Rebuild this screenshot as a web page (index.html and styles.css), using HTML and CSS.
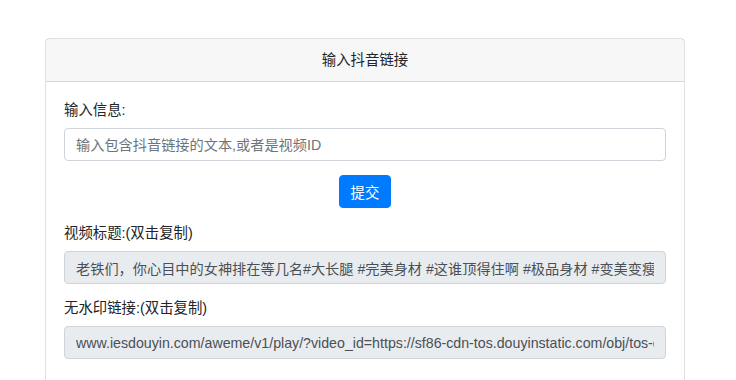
FILE: index.html
```html
<!DOCTYPE html>
<html lang="zh-CN">
<head>
    <meta charset="UTF-8">
    <meta name="viewport" content="width=device-width, initial-scale=1.0">
    <title>抖音去水印</title>
    <link rel="stylesheet" href="styles.css">
</head>
<body>

<div class="card">
    <div class="card-header">输入抖音链接</div>
    <div class="card-body">
        <div class="form-group">
            <label for="url">输入信息:</label>
            <input type="text" id="url" class="form-control" placeholder="输入包含抖音链接的文本,或者是视频ID">
        </div>
        <div class="submit-row">
            <button class="btn">提交</button>
        </div>
        <div class="form-group">
            <label for="title">视频标题:(双击复制)</label>
            <input type="text" id="title" class="form-control" readonly value="老铁们，你心目中的女神排在等几名#大长腿 #完美身材 #这谁顶得住啊 #极品身材 #变美变瘦变好看">
        </div>
        <div class="form-group">
            <label for="link">无水印链接:(双击复制)</label>
            <input type="text" id="link" class="form-control" readonly value="www.iesdouyin.com/aweme/v1/play/?video_id=https://sf86-cdn-tos.douyinstatic.com/obj/tos-cn-ve-15/">
        </div>
    </div>
</div>

</body>
</html>
```

FILE: styles.css
```css
body {
    margin: 0;
    background-color: #fff;
    font-family: "Liberation Sans", "Noto Sans CJK SC", sans-serif;
    font-size: 14.4px;
    color: #212529;
}
.card {
    margin: 38px 0 0 45px;
    width: 640px;
    height: 400px;
    box-sizing: border-box;
    border: 1px solid rgba(0, 0, 0, .125);
    border-radius: 4px;
}
.card-header {
    padding: 10.5px 18px;
    line-height: 21px;
    text-align: center;
    background-color: rgba(0, 0, 0, .03);
    border-bottom: 1px solid rgba(0, 0, 0, .125);
}
.card-body {
    padding: 18px 18px;
}
.form-group {
    margin-bottom: 14px;
}
label {
    display: block;
    line-height: 21px;
    margin-bottom: 7px;
}
.form-control {
    display: block;
    width: 100%;
    height: 33px;
    box-sizing: border-box;
    padding: 0 11px;
    font-family: inherit;
    font-size: 14.2px;
    color: #495057;
    background-color: #fff;
    border: 1px solid #ced4da;
    border-radius: 4px;
}
.form-control::placeholder {
    color: #6c757d;
}
.form-control[readonly] {
    background-color: #e9ecef;
}
.submit-row {
    display: flex;
    justify-content: center;
    margin-bottom: 15px;
}
.btn {
    height: 33px;
    padding: 0 10.5px;
    font-family: inherit;
    font-size: 14.4px;
    color: #fff;
    background-color: #007bff;
    border: 1px solid #007bff;
    border-radius: 4px;
    cursor: pointer;
}
```
